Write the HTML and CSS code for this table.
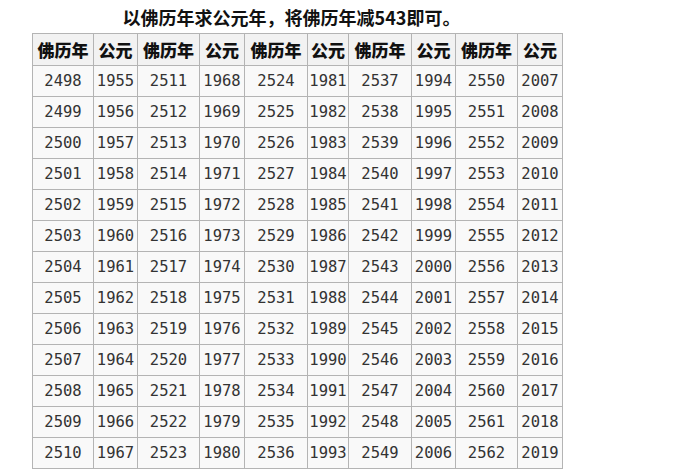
FILE: index.html
```html
<!DOCTYPE html>
<html lang="zh">
<head>
<meta charset="utf-8">
<link rel="stylesheet" href="styles.css">
</head>
<body>
<div class="wrap">
  <h1 class="title">以佛历年求公元年，将佛历年减543即可。</h1>
  <table class="years">
    <colgroup>
      <col class="c1"><col class="c2"><col class="c3"><col class="c4"><col class="c5"><col class="c6"><col class="c7"><col class="c8"><col class="c9"><col class="c10">
    </colgroup>
    <thead>
      <tr><th>佛历年</th><th>公元</th><th>佛历年</th><th>公元</th><th>佛历年</th><th>公元</th><th>佛历年</th><th>公元</th><th>佛历年</th><th>公元</th></tr>
    </thead>
    <tbody>
      <tr><td>2498</td><td>1955</td><td>2511</td><td>1968</td><td>2524</td><td>1981</td><td>2537</td><td>1994</td><td>2550</td><td>2007</td></tr>
      <tr><td>2499</td><td>1956</td><td>2512</td><td>1969</td><td>2525</td><td>1982</td><td>2538</td><td>1995</td><td>2551</td><td>2008</td></tr>
      <tr><td>2500</td><td>1957</td><td>2513</td><td>1970</td><td>2526</td><td>1983</td><td>2539</td><td>1996</td><td>2552</td><td>2009</td></tr>
      <tr><td>2501</td><td>1958</td><td>2514</td><td>1971</td><td>2527</td><td>1984</td><td>2540</td><td>1997</td><td>2553</td><td>2010</td></tr>
      <tr><td>2502</td><td>1959</td><td>2515</td><td>1972</td><td>2528</td><td>1985</td><td>2541</td><td>1998</td><td>2554</td><td>2011</td></tr>
      <tr><td>2503</td><td>1960</td><td>2516</td><td>1973</td><td>2529</td><td>1986</td><td>2542</td><td>1999</td><td>2555</td><td>2012</td></tr>
      <tr><td>2504</td><td>1961</td><td>2517</td><td>1974</td><td>2530</td><td>1987</td><td>2543</td><td>2000</td><td>2556</td><td>2013</td></tr>
      <tr><td>2505</td><td>1962</td><td>2518</td><td>1975</td><td>2531</td><td>1988</td><td>2544</td><td>2001</td><td>2557</td><td>2014</td></tr>
      <tr><td>2506</td><td>1963</td><td>2519</td><td>1976</td><td>2532</td><td>1989</td><td>2545</td><td>2002</td><td>2558</td><td>2015</td></tr>
      <tr><td>2507</td><td>1964</td><td>2520</td><td>1977</td><td>2533</td><td>1990</td><td>2546</td><td>2003</td><td>2559</td><td>2016</td></tr>
      <tr><td>2508</td><td>1965</td><td>2521</td><td>1978</td><td>2534</td><td>1991</td><td>2547</td><td>2004</td><td>2560</td><td>2017</td></tr>
      <tr><td>2509</td><td>1966</td><td>2522</td><td>1979</td><td>2535</td><td>1992</td><td>2548</td><td>2005</td><td>2561</td><td>2018</td></tr>
      <tr><td>2510</td><td>1967</td><td>2523</td><td>1980</td><td>2536</td><td>1993</td><td>2549</td><td>2006</td><td>2562</td><td>2019</td></tr>
    </tbody>
  </table>
</div>
</body>
</html>
```
FILE: styles.css
```css
html, body {
  margin: 0;
  padding: 0;
  background: #ffffff;
}

.wrap {
  padding: 8px 0 0 32px;
  width: 531px;
}

.title {
  margin: 0 0 6px 0;
  height: 19px;
  line-height: 19px;
  padding-right: 12px;
  text-align: center;
  font-family: "Noto Sans CJK SC", "Noto Sans", sans-serif;
  font-weight: bold;
  font-size: 18px;
  color: #111;
  white-space: nowrap;
}

.years {
  border-collapse: collapse;
  table-layout: fixed;
  width: 531px;
  border: 1px solid #a6a6a6;
}

.c1 { width: 61px; }
.c2 { width: 44px; }
.c3 { width: 62px; }
.c4 { width: 45px; }
.c5 { width: 63px; }
.c6 { width: 41px; }
.c7 { width: 63px; }
.c8 { width: 44px; }
.c9 { width: 62px; }
.c10 { width: 45px; }

.years th,
.years td {
  border: 1px solid #b4b4b4;
  padding: 0;
  text-align: center;
  white-space: nowrap;
  overflow: hidden;
}

.years th {
  height: 31px;
  background: #f2f2f2;
  font-family: "Noto Sans CJK SC", "Noto Sans", sans-serif;
  font-weight: 900;
  font-size: 17px;
  color: #111;
}

.years td {
  height: 30px;
  background: #f9f9f9;
  font-family: "DejaVu Sans Mono", monospace;
  font-size: 15.5px;
  color: #333;
}
```
